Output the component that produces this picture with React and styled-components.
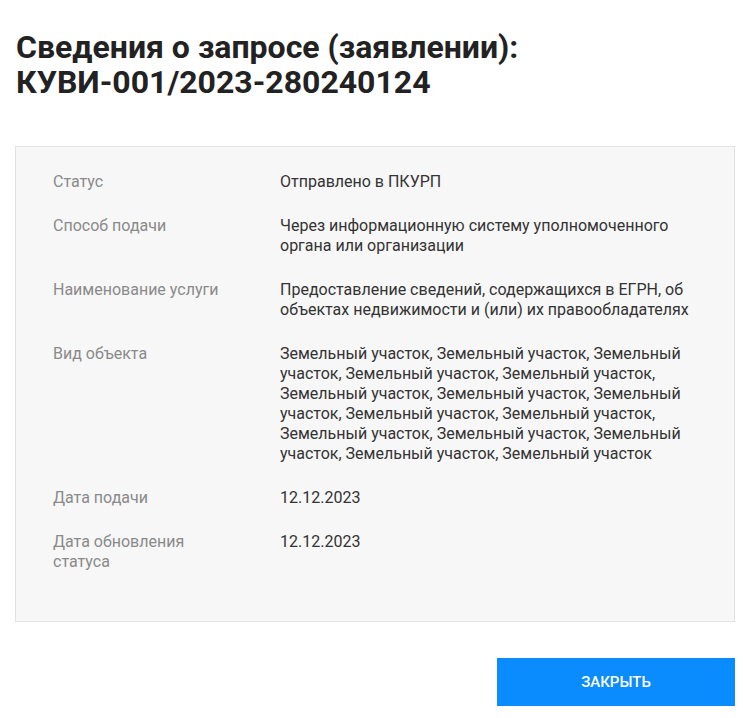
import React from "react";
import styled, { createGlobalStyle } from "styled-components";

const GlobalStyle = createGlobalStyle`
  body {
    margin: 0;
    background: #fff;
    font-family: Roboto, "Noto Sans", sans-serif;
    color: #333;
  }
`;

const Page = styled.div`
  width: 743px;
  padding: 30px 8px 12px 16px;
  box-sizing: border-box;
`;

const Title = styled.h1`
  margin: 0 0 46px;
  font-size: 32px;
  line-height: 35px;
  font-weight: 700;
  color: #222;
`;

const Panel = styled.div`
  margin-left: -1px;
  background: #f7f7f7;
  border: 1px solid #e2e2e2;
  padding: 25px 37px 49px;
  display: flex;
  flex-direction: column;
  gap: 24px;
`;

const Row = styled.div`
  display: grid;
  grid-template-columns: 227px 1fr;
  font-size: 16px;
  line-height: 20px;
`;

const Label = styled.div`
  color: #8a8a8a;
  padding-right: 42px;
`;

const Value = styled.div`
  color: #333;
`;

const Footer = styled.div`
  display: flex;
  justify-content: flex-end;
  margin-top: 36px;
`;

const Button = styled.button`
  width: 238px;
  height: 48px;
  border: none;
  background: #0a8cff;
  color: #fff;
  font-family: Roboto, sans-serif;
  font-size: 15px;
  font-weight: 500;
  text-transform: uppercase;
  cursor: pointer;
`;

const rows = [
  ["Статус", "Отправлено в ПКУРП"],
  ["Способ подачи", "Через информационную систему уполномоченного органа или организации"],
  [
    "Наименование услуги",
    "Предоставление сведений, содержащихся в ЕГРН, об объектах недвижимости и (или) их правообладателях",
  ],
  ["Вид объекта", Array(15).fill("Земельный участок").join(", ")],
  ["Дата подачи", "12.12.2023"],
  ["Дата обновления статуса", "12.12.2023"],
];

const App = () => {
  return (
    <Page>
      <GlobalStyle />
      <Title>
        Сведения о запросе (заявлении):
        <br />
        КУВИ-001/2023-280240124
      </Title>
      <Panel>
        {rows.map(([label, value]) => (
          <Row key={label}>
            <Label>{label}</Label>
            <Value>{value}</Value>
          </Row>
        ))}
      </Panel>
      <Footer>
        <Button>Закрыть</Button>
      </Footer>
    </Page>
  );
};

export default App;
